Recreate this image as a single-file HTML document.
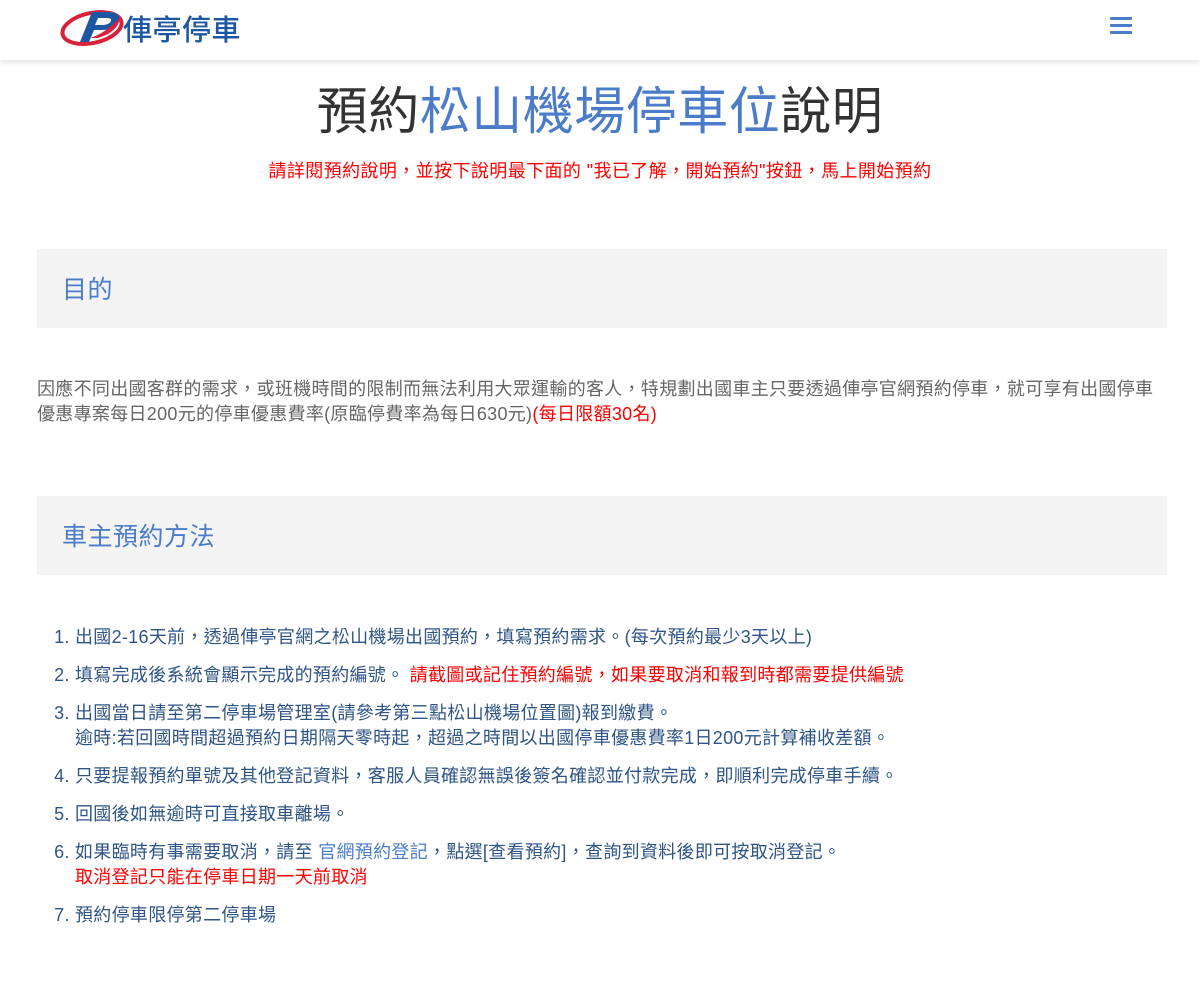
<!DOCTYPE html>
<html><head><meta charset="utf-8"><style>
body{margin:0;width:1200px;height:987px;overflow:hidden;background:#fff;font-family:"Liberation Sans","Noto Sans CJK TC",sans-serif;}
.hdr{position:absolute;left:0;top:0;width:1200px;height:60px;background:#fff;box-shadow:0 2px 5px rgba(0,0,0,.12);}
.logo{position:absolute;left:60px;top:4px;}
.logo span{position:absolute;left:63px;top:3px;font-size:29px;color:#1d57a4;white-space:nowrap;font-weight:500;letter-spacing:0.5px;}
.menu{position:absolute;left:1110px;top:17px;width:22px;}
.menu i{display:block;height:3px;background:#4a7cc9;margin-bottom:4px;border-radius:1px;}
h1{position:absolute;top:80px;left:0;width:1200px;margin:0;text-align:center;font-size:51px;font-weight:normal;color:#333;line-height:64px;letter-spacing:0.5px;}
h1 b{font-weight:normal;color:#4a7cc9;}
.sub{position:absolute;top:157px;width:1200px;text-align:center;color:#f00;font-size:18px;letter-spacing:0.4px;}
.box{position:absolute;left:37px;width:1130px;height:79px;background:#f4f4f4;}
.box div{position:absolute;left:25px;top:21px;font-size:25px;color:#4a7cc9;letter-spacing:0.5px;}
.p{position:absolute;left:37px;top:377px;width:1130px;font-size:18px;line-height:25px;color:#666;letter-spacing:0.3px;}
.r{color:#f00}
ol{position:absolute;left:37px;top:625px;margin:0;padding-left:38px;font-size:18px;line-height:25px;color:#2f5586;letter-spacing:0.3px;}
ol li{margin-bottom:13px;padding-left:0}
a{color:#4a7cc9;text-decoration:none}
</style></head><body>
<div class="hdr">
<div class="logo">
<svg width="64" height="44" viewBox="0 0 64 44"><ellipse cx="32" cy="24" rx="30" ry="15" fill="none" stroke="#d8213a" stroke-width="4" transform="rotate(-12 32 24)"/><path d="M20 38 L32 8 L50 8 Q62 9 58 18 Q54 26 42 26 L34 26 L29 38 Z" fill="#1d57a4"/><path d="M38 14 L35 21 L44 21 Q50 20 51 17 Q52 14 47 14 Z" fill="#fff"/><path d="M30 34 Q44 30 60 14 Q58 28 38 34 Z" fill="#d8213a"/></svg>
<span>俥亭停車</span></div>
<div class="menu"><i></i><i></i><i></i></div>
</div>
<h1>預約<b>松山機場停車位</b>說明</h1>
<div class="sub">請詳閱預約說明，並按下說明最下面的 "我已了解，開始預約"按鈕，馬上開始預約</div>
<div class="box" style="top:249px"><div>目的</div></div>
<div class="p">因應不同出國客群的需求，或班機時間的限制而無法利用大眾運輸的客人，特規劃出國車主只要透過俥亭官網預約停車，就可享有出國停車<br>優惠專案每日200元的停車優惠費率(原臨停費率為每日630元)<span class="r">(每日限額30名)</span></div>
<div class="box" style="top:496px"><div>車主預約方法</div></div>
<ol>
<li>出國2-16天前，透過俥亭官網之松山機場出國預約，填寫預約需求。(每次預約最少3天以上)</li>
<li>填寫完成後系統會顯示完成的預約編號。 <span class="r">請截圖或記住預約編號，如果要取消和報到時都需要提供編號</span></li>
<li>出國當日請至第二停車場管理室(請參考第三點松山機場位置圖)報到繳費。<br>逾時:若回國時間超過預約日期隔天零時起，超過之時間以出國停車優惠費率1日200元計算補收差額。</li>
<li>只要提報預約單號及其他登記資料，客服人員確認無誤後簽名確認並付款完成，即順利完成停車手續。</li>
<li>回國後如無逾時可直接取車離場。</li>
<li>如果臨時有事需要取消，請至 <a>官網預約登記</a>，點選[查看預約]，查詢到資料後即可按取消登記。<br><span class="r">取消登記只能在停車日期一天前取消</span></li>
<li>預約停車限停第二停車場</li>
</ol>
</body></html>
